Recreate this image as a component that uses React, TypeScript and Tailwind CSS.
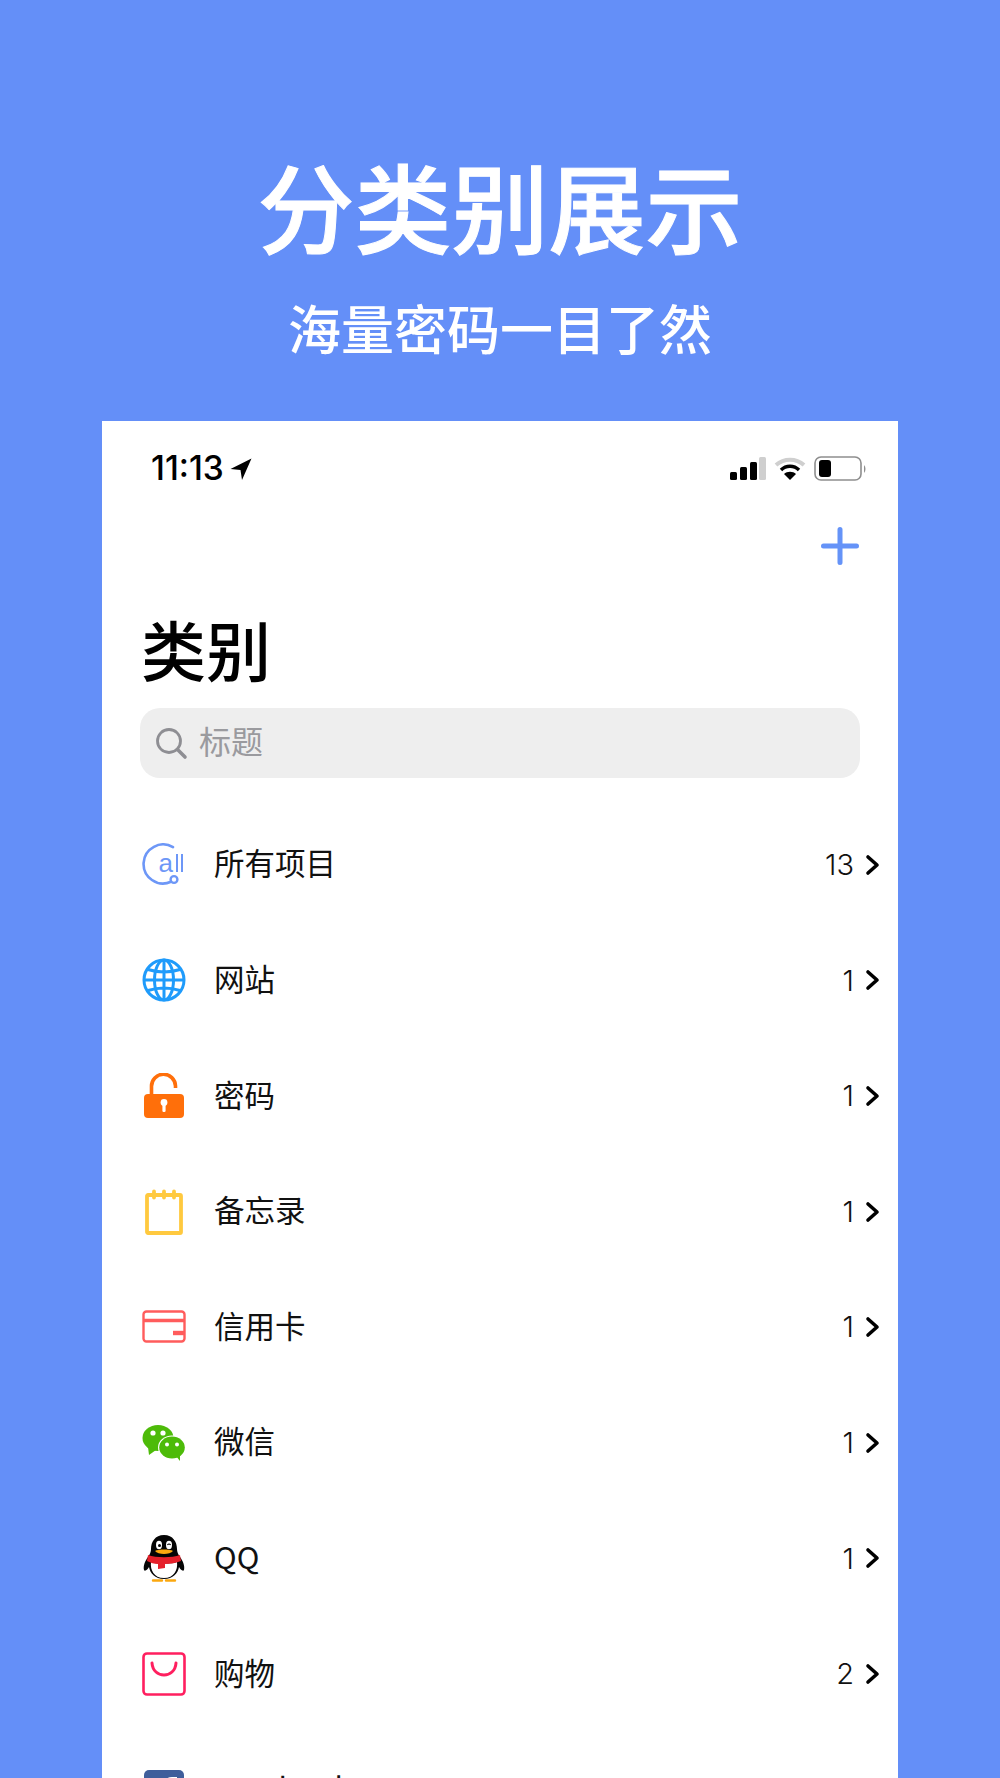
const font = { fontFamily: '"Noto Sans CJK SC", "Liberation Sans", sans-serif' };

function AllIcon() {
  return (
    <svg width="44" height="44" viewBox="0 0 44 44" fill="none">
      <path d="M31 4.2A19.5 19.5 0 1 0 29 38.8" stroke="#6d97f7" strokeWidth="2.6" strokeLinecap="round" />
      <circle cx="32" cy="36.5" r="3.4" stroke="#6d97f7" strokeWidth="2.4" />
      <text x="16.5" y="29" fontSize="26" fill="#6d97f7" fontFamily="Liberation Sans">a</text>
      <path d="M35 11v18M40 11v18" stroke="#6d97f7" strokeWidth="2" />
    </svg>
  );
}
function Globe() {
  return (
    <svg width="44" height="44" viewBox="0 0 44 44" fill="none" stroke="#1f9bfb" strokeWidth="3">
      <circle cx="22" cy="22" r="20" />
      <ellipse cx="22" cy="22" rx="9.5" ry="20" />
      <path d="M22 2v40M2 22h40M6 11.5q16 5 32 0M6 32.5q16-5 32 0" />
    </svg>
  );
}
function Lock() {
  return (
    <svg width="44" height="46" viewBox="0 0 44 46" fill="none">
      <path d="M9.5 22v-8.5a12 12 0 0 1 24-.5v2" stroke="#ff6f0a" strokeWidth="3.6" />
      <rect x="2" y="21" width="40" height="24" rx="4" fill="#ff6f0a" />
      <circle cx="22" cy="29.5" r="3.4" fill="#fff" />
      <rect x="20.4" y="30" width="3.2" height="9" rx="1.2" fill="#fff" />
    </svg>
  );
}
function Note() {
  return (
    <svg width="44" height="46" viewBox="0 0 44 46" fill="none">
      <rect x="5" y="6" width="34" height="38" rx="1" stroke="#ffc93f" strokeWidth="3.8" />
      <path d="M12 2.5v6M22 2.5v6M32 2.5v6" stroke="#ffc93f" strokeWidth="3.8" strokeLinecap="round" />
    </svg>
  );
}
function Card() {
  return (
    <svg width="44" height="34" viewBox="0 0 44 34" fill="none">
      <rect x="1.5" y="1.5" width="41" height="30" rx="3" stroke="#ff5c5c" strokeWidth="2.4" />
      <path d="M1.5 10.5h41" stroke="#ff5c5c" strokeWidth="3.4" />
      <path d="M31 23h11" stroke="#ff5c5c" strokeWidth="4.4" />
    </svg>
  );
}
function Wechat() {
  return (
    <svg width="44" height="36" viewBox="0 0 44 36">
      <ellipse cx="16" cy="13" rx="15.5" ry="13" fill="#4dbb09" />
      <path d="M6 22l1 8 7-5z" fill="#4dbb09" />
      <ellipse cx="30" cy="22.5" rx="14" ry="12" fill="#fff" />
      <ellipse cx="30" cy="22.5" rx="12.8" ry="11" fill="#4dbb09" />
      <path d="M34 31l4 5 0-7z" fill="#4dbb09" />
      <circle cx="11" cy="8" r="2.6" fill="#fff" />
      <circle cx="21" cy="8" r="2.6" fill="#fff" />
      <circle cx="25" cy="19.5" r="2" fill="#fff" />
      <circle cx="35" cy="19.5" r="2" fill="#fff" />
    </svg>
  );
}
function Penguin() {
  return (
    <svg width="42" height="48" viewBox="0 0 42 48">
      <path d="M21 1c9 0 13 7 13 14 0 3 1 5 3 8 3 4 5 9 4 13-1 2-4-1-5-3-1 6-6 12-15 12S7 39 6 33c-1 2-4 5-5 3-1-4 1-9 4-13 2-3 3-5 3-8C8 8 12 1 21 1z" fill="#050505" />
      <path d="M8 28c4 2 22 2 26 0 1 8-3 16-13 16S7 36 8 28z" fill="#fff" />
      <path d="M5 21c8 3 24 3 32 0l1 6c-5 2-10 3-16 3v4l-7 1v-5c-4 0-7-1-11-3z" fill="#e5202a" />
      <path d="M32 46.5h-9M19 46.5h-9" stroke="#fba80f" strokeWidth="2.4" strokeLinecap="round" />
      <ellipse cx="16" cy="11" rx="3" ry="4.2" fill="#fff" />
      <ellipse cx="26" cy="11" rx="3" ry="4.2" fill="#fff" />
      <circle cx="16.5" cy="11.5" r="1.5" fill="#050505" />
      <path d="M24.4 11q1.6-2 3.2 0" stroke="#050505" strokeWidth="1.2" fill="none" />
      <path d="M12 17c3-2 15-2 18 0-3 4-15 4-18 0z" fill="#fba80f" />
    </svg>
  );
}
function Bag() {
  return (
    <svg width="44" height="44" viewBox="0 0 44 44" fill="none" stroke="#ff1f5f" strokeWidth="2.6">
      <rect x="1.5" y="1.5" width="41" height="41" rx="3.5" />
      <path d="M10 11c1 16 23 16 24 0" strokeWidth="3" strokeLinecap="round" />
    </svg>
  );
}
function Fb() {
  return (
    <svg width="40" height="40" viewBox="0 0 40 40">
      <rect width="40" height="40" rx="5" fill="#3f5e9b" />
      <path d="M27 40V25h5l1-6h-6v-4c0-2 1-3 3-3h3V7h-5c-5 0-8 3-8 8v4h-5v6h5v15z" fill="#fff" />
    </svg>
  );
}

const rows = [
  { icon: <AllIcon />, name: "所有项目", count: "13" },
  { icon: <Globe />, name: "网站", count: "1" },
  { icon: <Lock />, name: "密码", count: "1" },
  { icon: <Note />, name: "备忘录", count: "1" },
  { icon: <Card />, name: "信用卡", count: "1" },
  { icon: <Wechat />, name: "微信", count: "1" },
  { icon: <Penguin />, name: "QQ", count: "1" },
  { icon: <Bag />, name: "购物", count: "2" },
  { icon: <Fb />, name: "Facebook", count: "1" },
];

export default function App() {
  return (
    <div className="h-[1778px] w-[1000px] overflow-hidden bg-[#648ff8]" style={font}>
      <div className="flex h-[421px] flex-col items-center text-white">
        <h1 className="mt-[148px] text-[97px] leading-[112px] font-medium [-webkit-text-stroke:1px_white]">分类别展示</h1>
        <p className="mt-[35px] text-[53px] leading-[64px] font-medium">海量密码一目了然</p>
      </div>
      <div className="mx-[102px] h-[1400px] bg-white">
        <div className="flex h-[76px] items-center justify-between pt-[20px] pr-[32px] pl-[49px]">
          <div className="flex items-center gap-[6px] text-[33.5px] leading-none font-medium text-black" style={{ fontFamily: '"Inter", sans-serif' }}>
            <span>11:13</span>
            <svg width="22" height="22" viewBox="0 0 22 22"><path d="M21.5 0.5L0.5 11l10 1L12 22z" fill="#000" /></svg>
          </div>
          <div className="flex items-center gap-[8px]">
            <svg width="36" height="24" viewBox="0 0 36 24">
              <rect x="0" y="15" width="7" height="8" rx="1.5" fill="#000" />
              <rect x="10" y="10" width="7" height="13" rx="1.5" fill="#000" />
              <rect x="20" y="5" width="7" height="18" rx="1.5" fill="#000" />
              <rect x="29" y="0" width="7" height="23" rx="1.5" fill="#cfcfcf" />
            </svg>
            <svg width="32" height="24" viewBox="0 0 32 24" fill="none">
              <path d="M2 8c8-7 20-7 28 0" stroke="#cfcfcf" strokeWidth="4" />
              <path d="M7 13c5-5 13-5 18 0" stroke="#000" strokeWidth="3.4" />
              <path d="M16 23l-6-6c3-3 9-3 12 0z" fill="#000" />
            </svg>
            <svg width="52" height="26" viewBox="0 0 52 26" fill="none">
              <rect x="1" y="1" width="46" height="23" rx="6" stroke="#8e8e8e" strokeWidth="1.6" />
              <rect x="5" y="4" width="12" height="17" rx="3" fill="#000" />
              <path d="M50 9c2 2 2 6 0 8z" fill="#8e8e8e" />
            </svg>
          </div>
        </div>
        <div className="flex justify-end pt-[30px] pr-[39px]">
          <svg width="38" height="38" viewBox="0 0 38 38" fill="none" stroke="#6593f8" strokeWidth="5" strokeLinecap="round">
            <path d="M19 2.5v33M2.5 19h33" />
          </svg>
        </div>
        <h2 className="mt-[41px] ml-[39px] text-[65px] leading-[84px] font-medium text-black">类别</h2>
        <div className="mx-[38px] mt-[18px] flex h-[70px] items-center rounded-[20px] bg-[#eeeeee] pl-[14px]">
          <svg width="34" height="34" viewBox="0 0 34 34" fill="none" stroke="#8e8e93" strokeWidth="2.8" strokeLinecap="round">
            <circle cx="15" cy="15" r="11.5" />
            <path d="M23.5 23.5L31 31" strokeWidth="3.6" />
          </svg>
          <span className="ml-[11px] pb-[7px] text-[32px] text-[#9a9a9e]">标题</span>
        </div>
        <div className="mt-[29px]">
          {rows.map((r) => (
            <div key={r.name} className="flex h-[115.6px] items-center pr-[18px] pl-[40px]">
              <div className="flex w-[44px] items-center justify-center">{r.icon}</div>
              <span className="ml-[28px] flex-1 pb-[3px] text-[30.5px] text-[#111]">{r.name}</span>
              <span className="mr-[11px] text-[29px] text-[#111]" style={{ fontFamily: '"Inter", sans-serif', fontWeight: 300 }}>{r.count}</span>
              <svg width="15" height="22" viewBox="0 0 15 22" fill="none" stroke="#000" strokeWidth="3.6" strokeLinecap="round" strokeLinejoin="round">
                <path d="M3 3l9 8-9 8" />
              </svg>
            </div>
          ))}
        </div>
      </div>
    </div>
  );
}
